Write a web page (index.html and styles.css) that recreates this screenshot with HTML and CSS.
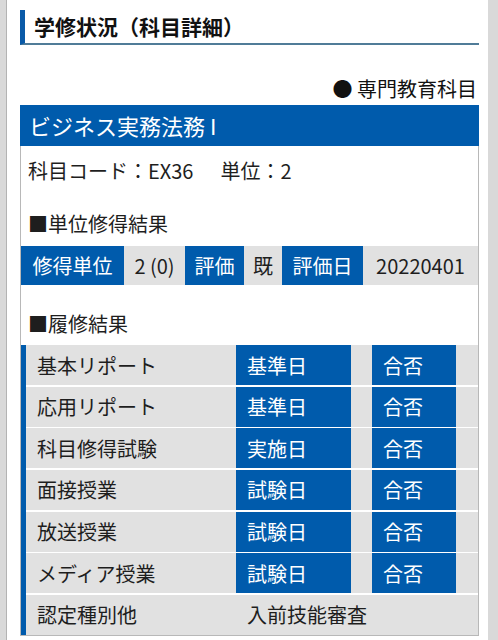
FILE: index.html
```html
<!DOCTYPE html>
<html lang="ja">
<head>
<meta charset="utf-8">
<title>学修状況（科目詳細）</title>
<link rel="stylesheet" href="styles.css">
</head>
<body>
<div class="page">
  <div class="strip-left"></div>
  <main class="main">
    <h1 class="title">学修状況（科目詳細）</h1>
    <p class="category">● 専門教育科目</p>
    <section class="card">
      <h2 class="card-head">ビジネス実務法務 I</h2>
      <p class="code">科目コード：EX36<span class="unit">単位：2</span></p>
      <h3 class="sub sub-first">■単位修得結果</h3>
      <div class="credits">
        <span class="c blue">修得単位</span>
        <span class="c gray">2 (0)</span>
        <span class="c blue">評価</span>
        <span class="c gray">既</span>
        <span class="c blue">評価日</span>
        <span class="c gray">20220401</span>
      </div>
      <h3 class="sub sub-second">■履修結果</h3>
      <div class="history">
        <div class="row"><span class="name">基本リポート</span><span class="lbl">基準日</span><span></span><span class="lbl">合否</span><span></span></div>
        <div class="row"><span class="name">応用リポート</span><span class="lbl">基準日</span><span></span><span class="lbl">合否</span><span></span></div>
        <div class="row"><span class="name">科目修得試験</span><span class="lbl">実施日</span><span></span><span class="lbl">合否</span><span></span></div>
        <div class="row"><span class="name">面接授業</span><span class="lbl">試験日</span><span></span><span class="lbl">合否</span><span></span></div>
        <div class="row"><span class="name">放送授業</span><span class="lbl">試験日</span><span></span><span class="lbl">合否</span><span></span></div>
        <div class="row"><span class="name">メディア授業</span><span class="lbl">試験日</span><span></span><span class="lbl">合否</span><span></span></div>
        <div class="row"><span class="name">認定種別他</span><span class="val">入前技能審査</span></div>
      </div>
    </section>
  </main>
  <div class="strip-right"></div>
</div>
</body>
</html>
```
FILE: styles.css
```css
* { box-sizing: border-box; }
html, body { margin: 0; padding: 0; background: #fff; }
body {
  font-family: "Noto Sans CJK JP", "Noto Sans", sans-serif;
  color: #1e1e1e;
}
.page {
  display: flex;
  width: 498px;
  height: 640px;
  overflow: hidden;
}
.strip-left {
  width: 7px;
  background: #d9d9d9;
  border-right: 1px solid #b3b3b3;
}
.strip-right {
  width: 10px;
  background: #d9d9d9;
}
.main {
  flex: 1;
  padding: 10px 9px 0 13px;
  background: #fff;
}
.title {
  margin: 0;
  height: 35px;
  line-height: 33px;
  font-size: 21px;
  font-weight: 700;
  color: #111;
  border-left: 5px solid #0a5aa8;
  border-bottom: 2px solid #507c98;
  padding-left: 9px;
}
.category {
  margin: 30px 0 2px;
  line-height: 28px;
  font-size: 20px;
  text-align: right;
  padding-right: 2px;
  color: #111;
}
.card {
  border: 1px solid #b8b8b8;
  border-top: 0;
}
.card-head {
  margin: 0 -1px;
  height: 41px;
  line-height: 41px;
  background: #005bac;
  color: #fff;
  font-size: 22px;
  font-weight: 400;
  padding-left: 9px;
}
.code {
  margin: 5px 0 0;
  line-height: 40px;
  font-size: 20px;
  padding-left: 7px;
}
.unit { margin-left: 27px; }
.sub {
  margin: 0;
  line-height: 40px;
  font-size: 20px;
  font-weight: 400;
  padding-left: 7px;
}
.sub-first { margin-top: 13px; }
.sub-second { margin-top: 19px; }
.credits {
  margin-top: 2px;
  height: 39px;
  display: grid;
  grid-template-columns: 103px 61px 59px 38px 81px 1fr;
  font-size: 20px;
}
.c {
  display: flex;
  align-items: center;
  justify-content: center;
}
.blue { background: #005bac; color: #fff; }
.gray { background: #e1e1e1; color: #1e1e1e; }
.history {
  margin-top: 1px;
  border-left: 5px solid #005bac;
  display: grid;
  grid-auto-rows: 40px;
  row-gap: 1.67px;
  background: #fff;
  font-size: 20px;
}
.row {
  display: grid;
  grid-template-columns: 210px 115px 21px 84px 1fr;
  background: #e1e1e1;
}
.row > span {
  display: flex;
  align-items: center;
}
.name { padding-left: 11px; color: #1e1e1e; }
.lbl {
  background: #005bac;
  color: #fff;
  padding-left: 11px;
}
.val {
  grid-column: 2 / -1;
  padding-left: 11px;
  color: #1e1e1e;
}
```
